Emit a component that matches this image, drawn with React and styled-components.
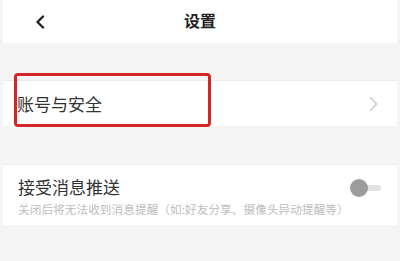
import React, { useState } from 'react';
import styled, { createGlobalStyle } from 'styled-components';

const GlobalStyle = createGlobalStyle`
	html, body {
		margin: 0;
		padding: 0;
		background: #f5f5f5;
		font-family: "Noto Sans CJK SC", "Noto Sans", sans-serif;
	}
`;

function App() {
	const [push, setPush] = useState(false);

	return (
		<Page>
			<GlobalStyle />
			<Header>
				<BackButton aria-label="back">
					<svg width="10" height="14" viewBox="0 0 10 14">
						<path d="M8 1.5 L2.5 7 L8 12.5" fill="none" stroke="#222" strokeWidth="2.4" strokeLinecap="round" strokeLinejoin="round" />
					</svg>
				</BackButton>
				<Title>设置</Title>
			</Header>

			<Gap height={37} />
			<Row height={46}>
				<Highlight />
				<RowLabel>账号与安全</RowLabel>
				<svg width="9" height="16" viewBox="0 0 9 16">
					<path d="M1.5 1.5 L7.5 8 L1.5 14.5" fill="none" stroke="#c8c8c8" strokeWidth="1.4" strokeLinecap="round" />
				</svg>
			</Row>

			<Gap height={38} />
			<Row height={61}>
				<RowText>
					<RowLabel>接受消息推送</RowLabel>
					<RowHint>关闭后将无法收到消息提醒（如:好友分享、摄像头异动提醒等）</RowHint>
				</RowText>
				<Toggle onClick={() => setPush(!push)} on={push}>
					<Knob on={push} />
				</Toggle>
			</Row>
		</Page>
	);
}

export default App;

const Page = styled.div`
	width: 400px;
	height: 261px;
	overflow: hidden;
	padding: 0 3px;
	box-sizing: border-box;
	background: #f5f5f5;
`;

const Header = styled.div`
	height: 43px;
	background: #fff;
	display: flex;
	align-items: center;
	justify-content: center;
	position: relative;
`;

const BackButton = styled.div`
	position: absolute;
	left: 32px;
	top: 15px;
	display: flex;
`;

const Title = styled.div`
	font-size: 16px;
	font-weight: 700;
	color: #222;
	margin-top: -3px;
`;

const Gap = styled.div`
	height: ${(p) => p.height}px;
`;

const Row = styled.div`
	position: relative;
	height: ${(p) => p.height}px;
	background: #fff;
	border-top: 1px solid #ececec;
	box-sizing: border-box;
	display: flex;
	align-items: center;
	justify-content: space-between;
	padding: 0 19px 0 14px;
`;

const Highlight = styled.div`
	position: absolute;
	left: 11px;
	top: -8px;
	width: 197px;
	height: 54px;
	border: 3px solid #d42626;
	border-radius: 4px;
	box-sizing: border-box;
	pointer-events: none;
`;

const RowText = styled.div`
	display: flex;
	flex-direction: column;
	gap: 4px;
	padding-top: 2px;
	padding-left: 1px;
`;

const RowLabel = styled.div`
	font-size: 17px;
	color: #333;
	line-height: 22px;
`;

const RowHint = styled.div`
	font-size: 11.6px;
	color: #bdbdbd;
	line-height: 14px;
	white-space: nowrap;
	letter-spacing: 0.1px;
`;

const Toggle = styled.div`
	position: relative;
	width: 22px;
	height: 6px;
	border-radius: 3px;
	background: ${(p) => (p.on ? '#9ed0a0' : '#e2e2e2')};
	margin-top: -14px;
	margin-right: -3px;
	cursor: pointer;
`;

const Knob = styled.div`
	position: absolute;
	top: -6px;
	left: ${(p) => (p.on ? '13px' : '-9px')};
	width: 18px;
	height: 18px;
	border-radius: 50%;
	background: ${(p) => (p.on ? '#4caf50' : '#9c9c9c')};
`;
